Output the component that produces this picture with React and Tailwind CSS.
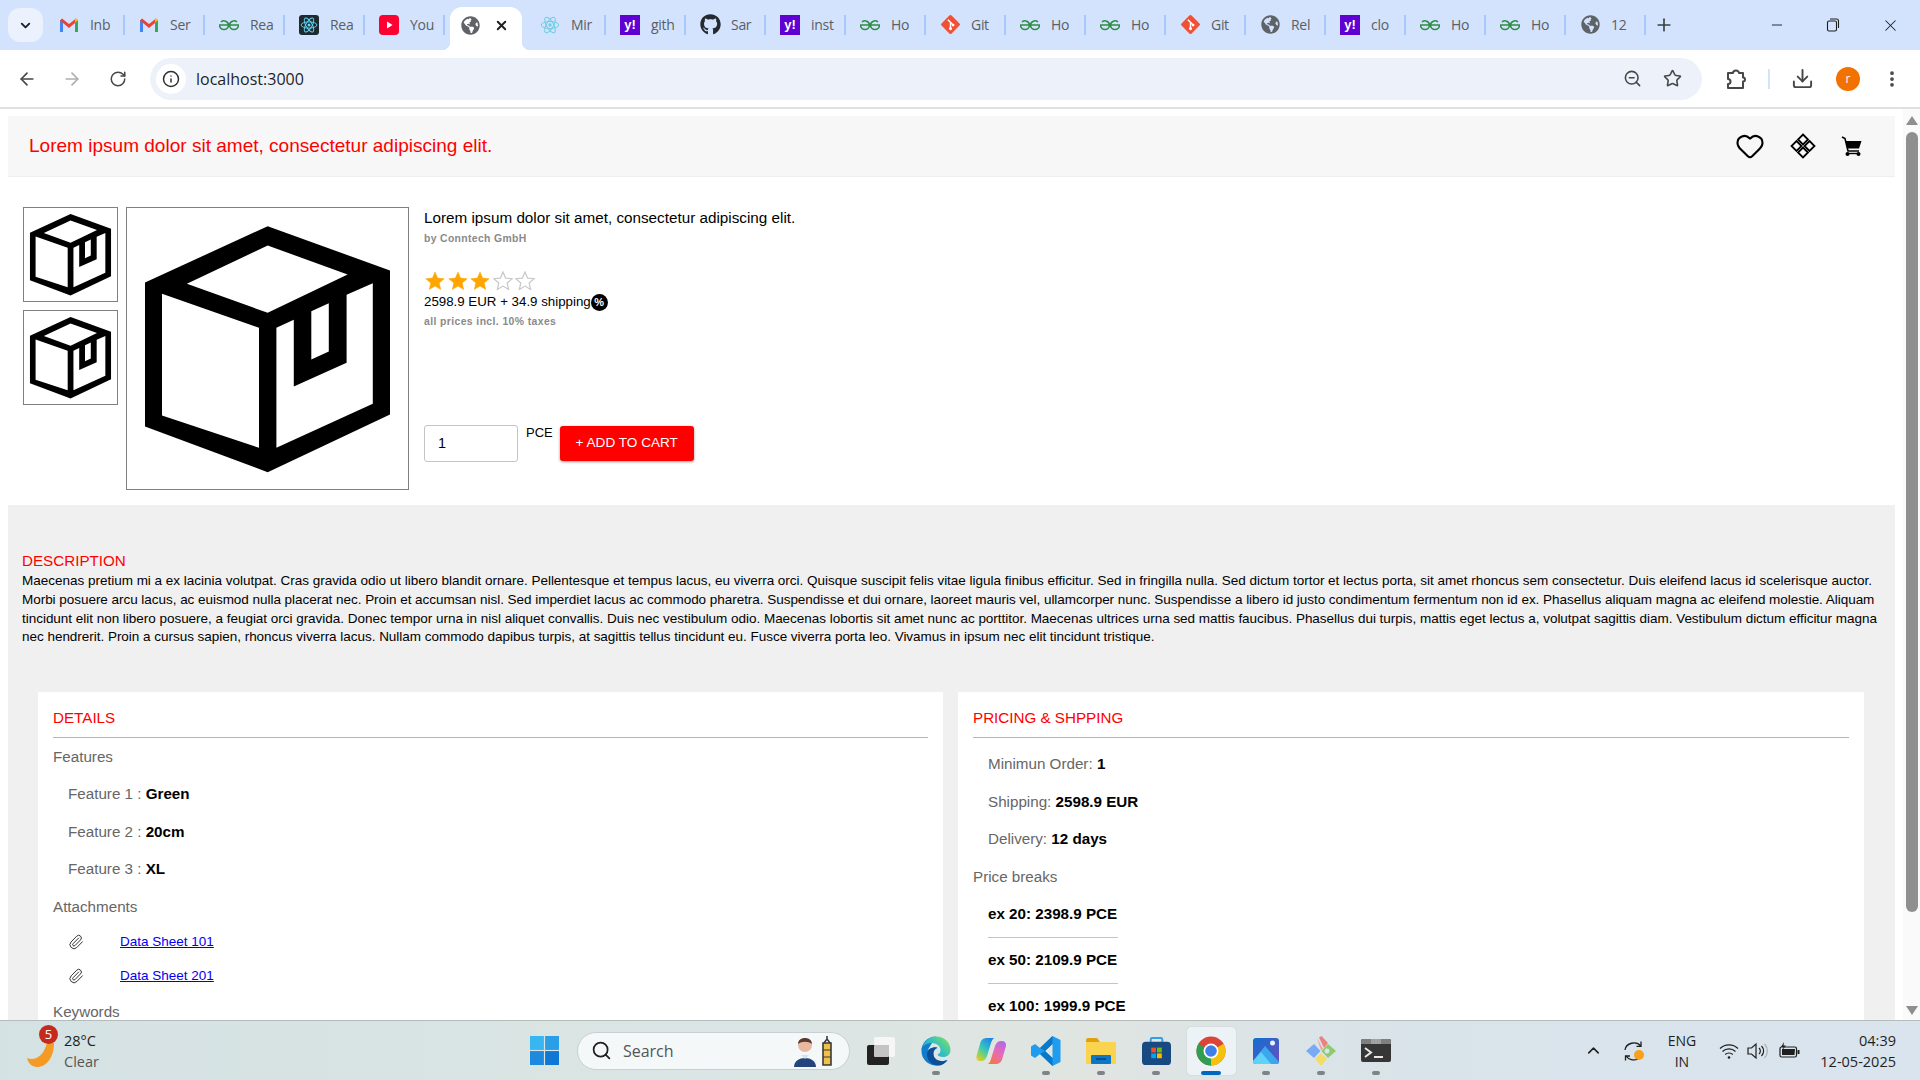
import React from 'react';
import {
  ArrowLeft, ArrowRight, RotateCw, Info, ZoomOut, Star, Download, MoreVertical,
  Plus, X, Minus, Heart, ChevronDown, ChevronUp, Search, Paperclip,
} from 'lucide-react';
import { FaGlobeAmericas, FaGithub } from 'react-icons/fa';

const tabsBefore = [
  { icon: 'gmail', text: 'Inb' },
  { icon: 'gmail', text: 'Ser' },
  { icon: 'gfg', text: 'Rea' },
  { icon: 'reactDark', text: 'Rea' },
  { icon: 'youtube', text: 'You' },
];
const tabsAfter = [
  { icon: 'react', text: 'Mir' },
  { icon: 'yahoo', text: 'gith' },
  { icon: 'github', text: 'Sar' },
  { icon: 'yahoo', text: 'inst' },
  { icon: 'gfg', text: 'Ho' },
  { icon: 'git', text: 'Git' },
  { icon: 'gfg', text: 'Ho' },
  { icon: 'gfg', text: 'Ho' },
  { icon: 'git', text: 'Git' },
  { icon: 'globe', text: 'Rel' },
  { icon: 'yahoo', text: 'clo' },
  { icon: 'gfg', text: 'Ho' },
  { icon: 'gfg', text: 'Ho' },
  { icon: 'globe', text: '12' },
];

function ReactMark({ color }) {
  return (
    <svg viewBox="0 0 24 24" className="w-full h-full" fill="none" stroke={color} strokeWidth="1.2">
      <circle cx="12" cy="12" r="2" fill={color} stroke="none" />
      <ellipse cx="12" cy="12" rx="10.5" ry="4.2" />
      <ellipse cx="12" cy="12" rx="10.5" ry="4.2" transform="rotate(60 12 12)" />
      <ellipse cx="12" cy="12" rx="10.5" ry="4.2" transform="rotate(120 12 12)" />
    </svg>
  );
}

function Favicon({ type }) {
  if (type === 'gmail') {
    return (
      <svg viewBox="0 0 20 16" className="w-[20px] h-[16px]">
        <path d="M1 15V3.5L4 2v13z" fill="#4285f4" />
        <path d="M16 15V2l3 1.5V15z" fill="#34a853" />
        <path d="M1 3.5 3 1.5 10 7l7-5.5 2 2L10 11z" fill="#ea4335" />
        <path d="M16 2l1-.5 2 2-3 2.3z" fill="#fbbc04" />
      </svg>
    );
  }
  if (type === 'gfg') {
    return (
      <svg viewBox="0 0 20 12" className="w-[20px] h-[12px]" fill="none" stroke="#2f8d46" strokeWidth="1.6">
        <path d="M2 3A4.5 4.5 0 0 1 9.5 6 4.5 4.5 0 0 1 .5 6H9.5" />
        <path d="M18 3A4.5 4.5 0 0 0 10.5 6 4.5 4.5 0 0 0 19.5 6H10.5" />
      </svg>
    );
  }
  if (type === 'reactDark') {
    return <span className="block w-[20px] h-[20px] rounded-[3px] bg-[#1f2a30] p-[1px]"><ReactMark color="#61dafb" /></span>;
  }
  if (type === 'react') {
    return <span className="block w-[20px] h-[20px]"><ReactMark color="#6fcde4" /></span>;
  }
  if (type === 'youtube') {
    return (
      <svg viewBox="0 0 20 20" className="w-[20px] h-[20px]">
        <rect width="20" height="20" rx="4" fill="#ff0033" />
        <path d="M8 6.5l5.5 3.5L8 13.5z" fill="#fff" />
      </svg>
    );
  }
  if (type === 'yahoo') {
    return (
      <span className="flex items-center justify-center w-[20px] h-[20px] bg-[#5f01d1] text-white text-[13px] font-bold leading-none font-['Liberation_Sans',sans-serif]">y!</span>
    );
  }
  if (type === 'github') return <FaGithub className="w-[21px] h-[21px] text-[#24292f]" />;
  if (type === 'git') {
    return (
      <svg viewBox="0 0 20 20" className="w-[21px] h-[21px]">
        <rect x="3.2" y="3.2" width="13.6" height="13.6" rx="1.5" fill="#f05033" transform="rotate(45 10 10)" />
        <path d="M7.5 5.5l5 5M10 8v6" stroke="#fff" strokeWidth="1.4" />
        <circle cx="10" cy="14" r="1.4" fill="#fff" />
        <circle cx="12.5" cy="10.5" r="1.3" fill="#fff" />
      </svg>
    );
  }
  return <FaGlobeAmericas className="w-[19px] h-[19px] text-[#5f6368]" />;
}

function Tab({ tab }) {
  return (
    <div className="w-[80px] h-[20px] flex items-center shrink-0 border-r-2 border-[#a8c7fa] -mt-[1px]">
      <span className="w-[45px] pl-[3px] flex justify-center shrink-0"><Favicon type={tab.icon} /></span>
      <span className="whitespace-nowrap text-[14px] text-[#5a5e63] font-['Open_Sans',sans-serif] tracking-[-0.3px]">{tab.text}</span>
    </div>
  );
}

function TabStrip() {
  return (
    <div className="h-[50px] bg-[#d3e3fd] flex items-center pl-[8px] shrink-0">
      <div className="w-[35px] h-[34px] rounded-[12px] bg-[#ebf1fd] flex items-center justify-center mr-[2px] shrink-0">
        <ChevronDown size={15} strokeWidth={3} className="text-[#1f1f1f]" />
      </div>
      {tabsBefore.map((t, i) => <Tab key={i} tab={t} />)}
      <div className="relative w-[72px] ml-[5px] mr-[4px] h-[43px] self-end shrink-0 bg-white rounded-t-[12px] flex items-center">
        <span className="absolute -left-[8px] bottom-0 w-[8px] h-[8px] bg-[radial-gradient(circle_at_0_0,#d3e3fd_8px,#fff_8.5px)]" />
        <span className="absolute -right-[8px] bottom-0 w-[8px] h-[8px] bg-[radial-gradient(circle_at_100%_0,#d3e3fd_8px,#fff_8.5px)]" />
        <FaGlobeAmericas className="w-[19px] h-[19px] text-[#5f6368] ml-[11px] -mt-[7px]" />
        <X size={15} strokeWidth={3} className="text-[#1f1f1f] ml-[14px] -mt-[7px]" />
      </div>
      {tabsAfter.map((t, i) => <Tab key={i} tab={t} />)}
      <Plus size={20} strokeWidth={2} className="text-[#3c4043] ml-[8px] shrink-0" />
      <Minus size={16} strokeWidth={1.4} className="text-[#1f1f1f] ml-[95px] shrink-0" />
      <svg viewBox="0 0 16 16" className="w-[16px] h-[16px] ml-[40px] shrink-0" fill="none" stroke="#1f1f1f" strokeWidth="1.1">
        <rect x="2.5" y="4" width="9" height="10" rx="1.5" />
        <path d="M5 2h6.5a2 2 0 0 1 2 2v7" />
      </svg>
      <X size={19} strokeWidth={1.3} className="text-[#1f1f1f] ml-[40px] shrink-0" />
    </div>
  );
}

function Toolbar() {
  return (
    <div className="h-[57px] bg-white rounded-t-[10px] flex items-center shrink-0">
      <ArrowLeft size={20} strokeWidth={2} className="text-[#474747] ml-[17px]" />
      <ArrowRight size={20} strokeWidth={2} className="text-[#aeaeae] ml-[25px]" />
      <RotateCw size={18} strokeWidth={2} className="text-[#474747] ml-[27px]" />
      <div className="ml-[23px] w-[1552px] h-[42px] rounded-full bg-[#edf2fa] flex items-center">
        <div className="w-[30px] h-[30px] rounded-full bg-white flex items-center justify-center ml-[6px]">
          <Info size={18} strokeWidth={2} className="text-[#303030]" />
        </div>
        <span className="ml-[10px] text-[16px] text-[#1f1f1f] font-['Open_Sans',sans-serif]">localhost:3000</span>
        <ZoomOut size={19} strokeWidth={2} className="text-[#474747] ml-auto" />
        <Star size={19} strokeWidth={2} className="text-[#474747] ml-[21px] mr-[20px]" />
      </div>
      <svg viewBox="0 0 22 22" className="w-[22px] h-[22px] ml-[23px]" fill="none" stroke="#474747" strokeWidth="2" strokeLinejoin="round">
        <path d="M3 5H8a3 2.5 0 0 1 6 0h4v4.5a2 2 0 0 1 0 4V20H3v-4a2.5 2.5 0 0 0 0-5z" />
      </svg>
      <div className="w-[2px] h-[20px] bg-[#d3e3fd] ml-[21px]" />
      <Download size={23} strokeWidth={2} className="text-[#474747] ml-[21px]" />
      <div className="w-[24px] h-[24px] rounded-full bg-[#f17200] text-white text-[12px] flex items-center justify-center ml-[22px] font-['Open_Sans',sans-serif]">r</div>
      <MoreVertical size={20} strokeWidth={2.5} className="text-[#474747] ml-[22px]" />
    </div>
  );
}

function BoxIcon() {
  return (
    <svg viewBox="1 1 281 280" className="w-full h-full block">
      <path
        fillRule="evenodd"
        fill="#000"
        d="M141.7 18.7 264 63v144L141.7 264.7 19 219V75z M141.7 38 221.6 67 141.7 105.3 60.9 76.3z M36 86.3 133 120.3V240.3L36 208z M150.4 120.3 167.8 112.3V179L220.6 155.3V87.3L246.8 75.7V196.3L150.4 240.3z M185.3 103.7 202.8 95.7V144L185.3 152z"
      />
    </svg>
  );
}

function Thumb() {
  return <div className="w-[95px] h-[95px] border border-[#808080] bg-white"><BoxIcon /></div>;
}

function Diamonds() {
  return (
    <svg viewBox="0 0 26 26" className="w-[26px] h-[26px]" fill="none" stroke="#000" strokeWidth="1.8">
      <path d="M13 1.5 18 6.5 13 11.5 8 6.5z" />
      <path d="M13 14.5 18 19.5 13 24.5 8 19.5z" />
      <path d="M6.5 8 11.5 13 6.5 18 1.5 13z" />
      <path d="M19.5 8 24.5 13 19.5 18 14.5 13z" />
    </svg>
  );
}

function Cart() {
  return (
    <svg viewBox="0 0 21 21" className="w-[21px] h-[21px]">
      <path d="M1 1 4 2.5 7 15H18" fill="none" stroke="#000" strokeWidth="1.6" />
      <path d="M4.8 5H20.5L18 12.5H6.6z" fill="#000" />
      <circle cx="6.5" cy="18" r="2" fill="#000" />
      <circle cx="17.5" cy="18" r="2" fill="#000" />
      <path d="M6.5 17.5H17.5" stroke="#000" strokeWidth="1.4" />
    </svg>
  );
}

function PageHeader() {
  return (
    <div className="h-[61px] ml-[8px] mt-[7px] w-[1887px] bg-[#f7f7f7] border-b border-[#eeeeee] flex items-center pl-[21px] shrink-0">
      <span className="text-[19.05px] text-[#ff0000]">Lorem ipsum dolor sit amet, consectetur adipiscing elit.</span>
      <Heart size={30} strokeWidth={1.7} className="text-black ml-auto" />
      <span className="ml-[25px]"><Diamonds /></span>
      <span className="ml-[25px] mr-[33px]"><Cart /></span>
    </div>
  );
}

function RatingStar({ filled }) {
  return (
    <svg viewBox="0 0 20 19" className="w-[20px] h-[19px]">
      <path
        d="M10 1l2.6 6.1 6.6.6-5 4.3 1.5 6.5L10 15.1 4.3 18.5 5.8 12l-5-4.3 6.6-.6z"
        fill={filled ? '#ffa500' : 'none'}
        stroke={filled ? '#ffa500' : '#c8c8c8'}
        strokeWidth={filled ? 0.5 : 1.2}
      />
    </svg>
  );
}

function ProductTop() {
  return (
    <div className="h-[328px] pt-[30px] pl-[23px] flex shrink-0">
      <div className="flex flex-col gap-[8px] w-[95px] mr-[8px]">
        <Thumb />
        <Thumb />
      </div>
      <div className="w-[283px] h-[283px] border border-[#808080]"><BoxIcon /></div>
      <div className="ml-[15px] flex flex-col">
        <div className="text-[15.25px] leading-[20px] mt-[1px] text-black">Lorem ipsum dolor sit amet, consectetur adipiscing elit.</div>
        <div className="text-[10.4px] leading-[14px] mt-[4px] font-bold text-[#8a8a8a] tracking-[0.35px]">by Conntech GmbH</div>
        <div className="flex mt-[24px] ml-[1px] gap-[2.6px] h-[20px] items-center">
          {[0, 1, 2].map(i => <RatingStar key={i} filled />)}
          {[3, 4].map(i => <RatingStar key={i} />)}
        </div>
        <div className="flex items-center text-[13.3px] leading-[18px] mt-[3px] text-black">
          2598.9 EUR + 34.9 shipping
          <span className="w-[17px] h-[17px] rounded-full bg-black text-white text-[11px] font-bold leading-none flex items-center justify-center">%</span>
        </div>
        <div className="text-[10.4px] leading-[14px] mt-[4px] font-bold text-[#8a8a8a] tracking-[0.4px]">all prices incl. 10% taxes</div>
        <div className="flex mt-[96px] items-start">
          <div className="w-[94px] h-[37px] border border-[#c4c4c4] rounded-[3px] text-[14.4px] flex items-center pl-[13px] bg-white">1</div>
          <span className="ml-[8px] mt-[-1px] text-[13px] leading-[18px]">PCE</span>
          <button className="ml-[7px] mt-[1px] w-[134px] h-[35px] rounded-[3px] bg-[#ff0000] text-white text-[13.6px] shadow-[0_1px_3px_rgba(0,0,0,0.4)]">+ ADD TO CART</button>
        </div>
      </div>
    </div>
  );
}

function Description() {
  return (
    <div className="pl-[14px] pr-[14px] pt-[46px]">
      <div className="text-[15.2px] leading-[20px] text-[#ff0000]">DESCRIPTION</div>
      <p className="text-[13.5px] leading-[18.8px] text-black mt-[1px] whitespace-nowrap">
        <span className="block tracking-[-0.01px]">Maecenas pretium mi a ex lacinia volutpat. Cras gravida odio ut libero blandit ornare. Pellentesque et tempus lacus, eu viverra orci. Quisque suscipit felis vitae ligula finibus efficitur. Sed in fringilla nulla. Sed dictum tortor et lectus porta, sit amet rhoncus sem consectetur. Duis eleifend lacus id scelerisque auctor.</span>
        <span className="block tracking-[-0.036px]">Morbi posuere arcu lacus, ac euismod nulla placerat nec. Proin et accumsan nisl. Sed imperdiet lacus ac commodo pharetra. Suspendisse et dui ornare, laoreet mauris vel, ullamcorper nunc. Suspendisse a libero id justo condimentum fermentum non id ex. Phasellus aliquam magna ac eleifend molestie. Aliquam</span>
        <span className="block tracking-[-0.025px]">tincidunt elit non libero posuere, a feugiat orci gravida. Donec tempor urna in nisl aliquet convallis. Duis nec vestibulum odio. Maecenas lobortis sit amet nunc ac porttitor. Maecenas ultrices urna sed mattis faucibus. Phasellus dui turpis, mattis eget lectus a, volutpat sagittis diam. Vestibulum dictum efficitur magna</span>
        <span className="block tracking-[-0.025px]">nec hendrerit. Proin a cursus sapien, rhoncus viverra lacus. Nullam commodo dapibus turpis, at sagittis tellus tincidunt eu. Fusce viverra porta leo. Vivamus in ipsum nec elit tincidunt tristique.</span>
      </p>
    </div>
  );
}

function Row({ label, value }) {
  return (
    <div className="h-[37.5px] flex items-center pl-[15px] text-[15.2px]">
      <span className="text-[#666666] whitespace-pre">{label}</span>
      <b className="text-black">{value}</b>
    </div>
  );
}

function Attachment({ name }) {
  return (
    <div className="h-[34px] flex items-center">
      <Paperclip size={16} strokeWidth={1.5} className="text-[#333333] ml-[15px] mr-[36px]" />
      <a href="#" className="text-[13.5px] text-[#0000ee] underline">{name}</a>
    </div>
  );
}

function Card({ title, children }) {
  return (
    <div className="bg-white pt-[16px] px-[15px] h-[400px]">
      <div className="text-[15.2px] leading-[20px] text-[#ff0000]">{title}</div>
      <div className="h-[1px] bg-[#b5b5b5] mt-[9px]" />
      {children}
    </div>
  );
}

function Cards() {
  return (
    <div className="grid grid-cols-[905px_906px] gap-[15px] pl-[30px] mt-[45px]">
      <Card title="DETAILS">
        <div className="text-[15.2px] leading-[20px] text-[#666666] mt-[9px] mb-[8.5px]">Features</div>
        <Row label="Feature 1 : " value="Green" />
        <Row label="Feature 2 : " value="20cm" />
        <Row label="Feature 3 : " value="XL" />
        <div className="text-[15.2px] leading-[20px] text-[#666666] mt-[8.5px] mb-[8px]">Attachments</div>
        <Attachment name="Data Sheet 101" />
        <Attachment name="Data Sheet 201" />
        <div className="text-[15.2px] leading-[20px] text-[#666666] mt-[9px]">Keywords</div>
      </Card>
      <Card title="PRICING & SHPPING">
        <div className="mt-[7.5px]" />
        <Row label="Minimun Order: " value="1" />
        <Row label="Shipping: " value="2598.9 EUR" />
        <Row label="Delivery: " value="12 days" />
        <div className="text-[15.2px] leading-[20px] text-[#666666] mt-[8.5px] mb-[5px]">Price breaks</div>
        {['ex 20: 2398.9 PCE', 'ex 50: 2109.9 PCE', 'ex 100: 1999.9 PCE'].map((p, i) => (
          <div key={i} className={`ml-[15px] w-[130px] h-[46px] flex items-center text-[15.2px] font-bold whitespace-nowrap text-black ${i < 2 ? 'border-b border-[#c4c4c4]' : ''}`}>{p}</div>
        ))}
      </Card>
    </div>
  );
}

function Scrollbar() {
  return (
    <div className="w-[17px] bg-[#fafafa] flex flex-col items-center shrink-0 pt-[7px]">
      <span className="w-0 h-0 border-x-[6px] border-x-transparent border-b-[9px] border-b-[#8f8f8f]" />
      <div className="w-[12px] h-[780px] bg-[#8f8f8f] rounded-[6px] mt-[7px]" />
      <span className="w-0 h-0 border-x-[6px] border-x-transparent border-t-[9px] border-t-[#8f8f8f] mt-auto mb-[5px]" />
    </div>
  );
}

function TaskIcon({ children, dot = true, active = false }) {
  return (
    <div className={`relative w-[49px] h-[48px] mx-[3px] rounded-[4px] flex items-center justify-center shrink-0 ${active ? 'bg-[#edf2f7] shadow-[0_0_1px_rgba(0,0,0,0.25)]' : ''}`}>
      {children}
      {dot && !active && <span className="absolute bottom-0 left-[20px] w-[8px] h-[4px] rounded-full bg-[#7d8488]" />}
      {active && <span className="absolute bottom-0 left-[14px] w-[20px] h-[4px] rounded-full bg-[#0067c0]" />}
    </div>
  );
}

function Taskbar() {
  return (
    <div className="h-[60px] border-t border-[#b4bcbc] bg-[linear-gradient(90deg,#d5e2e3,#dbe5e4_40%,#e0e5e1_55%,#d8e3ea_75%,#d9e4ee)] flex items-center shrink-0 relative">
      <div className="relative w-[26px] h-[26px] ml-[27px] mt-[6px]">
        <svg viewBox="0 0 28 28" className="w-[28px] h-[28px]">
          <path d="M27 2c0 14-7 24-17 24C5 26 1 22 0 17c6 3 16 0 20-15z" fill="#f59a23" />
        </svg>
        <span className="absolute -top-[16px] left-[12px] w-[19px] h-[19px] rounded-full bg-[#c42b1c] text-white text-[13px] leading-[19px] text-center font-['Open_Sans',sans-serif]">5</span>
      </div>
      <div className="ml-[11px] flex flex-col font-['Open_Sans',sans-serif] text-[14.5px] leading-[21px] text-[#1f1f1f]">
        <span>28°C</span>
        <span className="text-[#555555]">Clear</span>
      </div>
      <svg viewBox="0 0 30 30" className="w-[29px] h-[29px] ml-[431px] shrink-0">
        <rect width="14.4" height="14.4" fill="#38b6f1" />
        <rect x="15.6" width="14.4" height="14.4" fill="#2a9fe8" />
        <rect y="15.6" width="14.4" height="14.4" fill="#1d8ae0" />
        <rect x="15.6" y="15.6" width="14.4" height="14.4" fill="#0f78d4" />
      </svg>
      <div className="ml-[18px] w-[273px] h-[38px] rounded-full bg-[#f4f8f9] border border-[#c8d0d2] flex items-center shrink-0">
        <Search size={21} strokeWidth={2} className="text-[#1f1f1f] ml-[13px]" />
        <span className="ml-[11px] text-[16px] text-[#555555] font-['Open_Sans',sans-serif]">Search</span>
        <svg viewBox="0 0 42 32" className="w-[42px] h-[32px] ml-auto mr-[14px]">
          <circle cx="12" cy="10" r="7" fill="#e8b9a0" />
          <path d="M5 9c0-8 14-8 14 0-4-3-10-3-14 0z" fill="#5a3a30" />
          <path d="M1 32c0-12 22-12 22 0z" fill="#23457c" />
          <path d="M8 20l4 4 4-4z" fill="#cfe2ee" />
          <path d="M30 8h8v22h-8z" fill="#f0c04a" stroke="#3a3a3a" strokeWidth="1.6" />
          <path d="M34 1v4M31 8l3-4 3 4" fill="none" stroke="#3a3a3a" strokeWidth="1.6" />
          <path d="M30 15h8M30 22h8" stroke="#3a3a3a" strokeWidth="1.2" />
        </svg>
      </div>
      <div className="ml-[4px] flex shrink-0">
        <TaskIcon dot={false}>
          <svg viewBox="0 0 30 30" className="w-[30px] h-[30px]">
            <rect x="8" y="1" width="21" height="20" rx="2" fill="#f6f6f6" />
            <rect x="1" y="9" width="22" height="20" rx="2" fill="#222222" />
            <rect x="8" y="9" width="15" height="12" rx="1" fill="#c4c4c4" />
          </svg>
        </TaskIcon>
        <TaskIcon>
          <svg viewBox="0 0 30 30" className="w-[30px] h-[30px]">
            <defs>
              <linearGradient id="edgeTop" x1="0" y1="1" x2="1" y2="0.3">
                <stop offset="0" stopColor="#1a9ad6" />
                <stop offset="0.6" stopColor="#35c1c1" />
                <stop offset="1" stopColor="#6fe06a" />
              </linearGradient>
            </defs>
            <path d="M15 .5C6.5.5.5 7 .5 15c0 8 6.500 14.500 14.500 14.500 5 0 9-2 11.500-5.500-5 2.500-13 1-14-5-.6-3.500 1.500-6 4-7-4-1-11 .5-12 5.500" fill="#0f7ccc" />
            <path d="M.6 14C2 6 8 .5 15.500.5 24 .5 29.500 7 29.500 14c0 4.500-3.500 7-7.500 7-3 0-5-1-5.500-2.500 2-1 3-2.500 3-4.500 0-4-4-7-9-7-5 0-9.500 3-10.400 6.500z" fill="url(#edgeTop)" />
            <path d="M12.500 19c-.6-3.500 1-6.500 4-7.500-5-1-10 1.500-10.500 6.500C5.500 24 11 29.500 17 29.500c4 0 7.500-2 9.500-5.500-5 2.500-13 1-14-5z" fill="#0b4f98" />
          </svg>
        </TaskIcon>
        <TaskIcon dot={false}>
          <svg viewBox="0 0 30 30" className="w-[30px] h-[30px]">
            <defs>
              <linearGradient id="copL" x1="0.8" y1="0" x2="0.1" y2="1">
                <stop offset="0" stopColor="#1f7fe8" />
                <stop offset="0.5" stopColor="#34c7c0" />
                <stop offset="0.8" stopColor="#9bd54a" />
                <stop offset="1" stopColor="#f5c33b" />
              </linearGradient>
              <linearGradient id="copR" x1="0.8" y1="0" x2="0.2" y2="1">
                <stop offset="0" stopColor="#b667e8" />
                <stop offset="0.5" stopColor="#e96bb3" />
                <stop offset="1" stopColor="#f5793f" />
              </linearGradient>
            </defs>
            <path d="M11 2h8c-2 0-3 2-4 5l-4 13c-1 3-3 5-6 5H4C1.500 25 0 23 .5 20L4 8c1-4 3-6 7-6z" fill="url(#copL)" />
            <path d="M19 28h-8c2 0 3-2 4-5l4-13c1-3 3-5 6-5h1c2.500 0 4.500 2 4 5l-3.500 12c-1 4-3 6-7.500 6z" fill="url(#copR)" />
          </svg>
        </TaskIcon>
        <TaskIcon>
          <svg viewBox="0 0 30 30" className="w-[30px] h-[30px]">
            <path d="M21.500 0 29.500 4v22l-8 4L9 18l-5 4-4-2.500V10.500L4 8l5 4zM21.500 8l-7.500 7 7.500 7z" fill="#1f9cf0" />
            <path d="M21.500 0v8l-7.500 7-5-3zM9 18l5-3 7.500 7v8z" fill="#0a78c9" />
          </svg>
        </TaskIcon>
        <TaskIcon>
          <svg viewBox="0 0 30 26" className="w-[30px] h-[26px]">
            <path d="M0 2a2 2 0 0 1 2-2h9l3 4H0z" fill="#e0a010" />
            <rect y="4" width="30" height="22" rx="1" fill="#fbd44f" />
            <rect x="5" y="17" width="20" height="9" rx="1" fill="#0d77c7" />
            <rect x="10" y="20" width="10" height="2" fill="#074f8a" />
          </svg>
        </TaskIcon>
        <TaskIcon>
          <svg viewBox="0 0 30 30" className="w-[29px] h-[29px]">
            <path d="M9 7V3.500A1.500 1.500 0 0 1 10.500 2h9A1.500 1.500 0 0 1 21 3.500V7" fill="none" stroke="#30a0e6" strokeWidth="2" />
            <rect y="6" width="30" height="24" rx="4" fill="#164a80" />
            <rect x="9.500" y="12" width="5" height="5" fill="#f25022" />
            <rect x="15.500" y="12" width="5" height="5" fill="#7fba00" />
            <rect x="9.500" y="18" width="5" height="5" fill="#00a4ef" />
            <rect x="15.500" y="18" width="5" height="5" fill="#ffb900" />
          </svg>
        </TaskIcon>
        <TaskIcon active>
          <svg viewBox="0 0 30 30" className="w-[30px] h-[30px]">
            <circle cx="15" cy="15" r="14.500" fill="#db4437" />
            <path d="M15 15 27.560 7.750A14.500 14.500 0 0 1 15 29.500z" fill="#f4c20d" />
            <path d="M15 15 15 29.500A14.500 14.500 0 0 1 2.440 7.750z" fill="#2e9e50" />
            <circle cx="15" cy="15" r="7.500" fill="#fff" />
            <circle cx="15" cy="15" r="5.800" fill="#3f7fe8" />
          </svg>
        </TaskIcon>
        <TaskIcon>
          <svg viewBox="0 0 26 26" className="w-[26px] h-[26px]">
            <defs>
              <linearGradient id="phBg" x1="0" y1="0" x2="1" y2="1">
                <stop offset="0" stopColor="#0f6fd0" />
                <stop offset="1" stopColor="#6a4fc0" />
              </linearGradient>
            </defs>
            <rect width="26" height="26" rx="3" fill="url(#phBg)" />
            <circle cx="19.500" cy="5" r="2.500" fill="#e8f4ff" />
            <path d="M0 23 12 8l14 16v0a2 2 0 0 1-2 2H3a3 3 0 0 1-3-3z" fill="#3aa8ec" />
            <path d="M0 23 8 14l10 12H3a3 3 0 0 1-3-3z" fill="#5fd2fa" />
          </svg>
        </TaskIcon>
        <TaskIcon>
          <svg viewBox="0 0 30 30" className="w-[30px] h-[30px]">
            <path d="M8 8l6.500 7L8 22 0 15z" fill="#78aaf5" />
            <path d="M13 1.500 15.500 0 22 7l-4 5z" fill="#ef8080" />
            <path d="M22 8l8 7-8 7-6.500-7zM21 12.500a2.500 2.500 0 1 0 .1 0z" fill="#8ccc70" fillRule="evenodd" />
            <path d="M15 17l6 6-6 7-6-7z" fill="#f4dc6a" />
            <path d="M11 2l6 11-2 1z" fill="#f0a0a0" />
          </svg>
        </TaskIcon>
        <TaskIcon>
          <svg viewBox="0 0 30 23" className="w-[30px] h-[23px]">
            <rect width="30" height="23" rx="2" fill="#363636" />
            <path d="M2 0h26a2 2 0 0 1 2 2v3H0V2a2 2 0 0 1 2-2z" fill="#7f7f7f" />
            <rect x="10" width="10" height="5" fill="#a0a0a0" />
            <path d="M4 9l6 4.500-6 4.500" stroke="#e8e8e8" strokeWidth="2" fill="none" />
            <path d="M13 18h9" stroke="#e8e8e8" strokeWidth="2" />
          </svg>
        </TaskIcon>
      </div>
      <ChevronUp size={19} strokeWidth={2} className="text-[#1f1f1f] ml-[180px] shrink-0" />
      <span className="relative w-[22px] h-[22px] ml-[20px] shrink-0">
        <svg viewBox="0 0 22 22" className="w-[22px] h-[22px]" fill="none" stroke="#1f1f1f" strokeWidth="1.3">
          <path d="M2 10A9 8 0 0 1 18 6M18 1.500V6.300H13.500" />
          <path d="M15 19A9 8 0 0 1 3 16M2.500 20.500V16H7" />
        </svg>
        <span className="absolute top-[10px] left-[11px] w-[10px] h-[10px] rounded-full bg-[#f9a11a]" />
      </span>
      <div className="ml-[17px] w-[40px] flex flex-col items-center text-[14px] leading-[21px] text-[#1f1f1f] font-['Open_Sans',sans-serif] shrink-0">
        <span>ENG</span>
        <span>IN</span>
      </div>
      <svg viewBox="0 0 20 18" className="w-[20px] h-[18px] ml-[17px] shrink-0" fill="none" stroke="#1f1f1f" strokeWidth="1.2">
        <path d="M1 6.500a13 13 0 0 1 18 0M3.500 9.500a9.500 9.500 0 0 1 13 0M6.200 12.500a5.500 5.500 0 0 1 7.600 0" />
        <circle cx="10" cy="15.500" r="1.300" fill="#1f1f1f" stroke="none" />
      </svg>
      <svg viewBox="0 0 22 18" className="w-[22px] h-[18px] ml-[8px] shrink-0" fill="none" stroke="#1f1f1f" strokeWidth="1.2">
        <path d="M1 6h3.500L9 2v14l-4.500-4H1z" />
        <path d="M12 6a4 4 0 0 1 0 6M14.500 4a7 7 0 0 1 0 10" />
        <path d="M17.500 2a10 10 0 0 1 0 14" stroke="#a8b0b4" />
      </svg>
      <svg viewBox="0 0 22 18" className="w-[22px] h-[18px] ml-[9px] shrink-0">
        <path d="M2 6.500A1.500 1.500 0 0 1 3.500 5H17a1.500 1.500 0 0 1 1.500 1.500v7A1.500 1.500 0 0 1 17 15H3.500A1.500 1.500 0 0 1 2 13.500z" fill="none" stroke="#1f1f1f" strokeWidth="1.2" />
        <path d="M4 7h13l-.5 6H4z" fill="#1f1f1f" />
        <path d="M19.500 8h2v4h-2z" fill="#1f1f1f" />
        <path d="M6 0 3 5h2.500L4 8.500 8 3.500H5.500z" fill="#1f1f1f" />
      </svg>
      <div className="ml-auto mr-[24px] flex flex-col items-end text-[14.5px] leading-[21px] text-[#1f1f1f] font-['Open_Sans',sans-serif] shrink-0">
        <span>04:39</span>
        <span>12-05-2025</span>
      </div>
    </div>
  );
}

export default function App() {
  return (
    <div className="w-[1920px] h-[1080px] flex flex-col overflow-hidden bg-white font-['Liberation_Sans',Arial,sans-serif]">
      <TabStrip />
      <Toolbar />
      <div className="h-[2px] bg-[#e0e0e0] shrink-0" />
      <div className="flex-1 min-h-0 flex">
        <div className="flex-1 min-w-0 overflow-hidden flex flex-col">
          <PageHeader />
          <ProductTop />
          <div className="ml-[8px] w-[1887px] flex-1 bg-[#f0f0f0] overflow-hidden">
            <Description />
            <Cards />
          </div>
        </div>
        <Scrollbar />
      </div>
      <Taskbar />
    </div>
  );
}
